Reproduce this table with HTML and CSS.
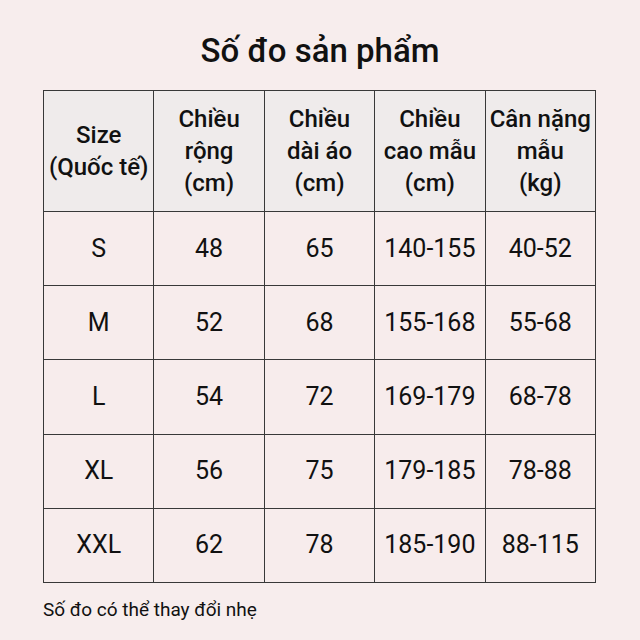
FILE: index.html
```html
<!DOCTYPE html>
<html lang="vi">
<head>
<meta charset="utf-8">
<title>Số đo sản phẩm</title>
<link rel="stylesheet" href="styles.css">
</head>
<body>
<main class="page">
  <h1 class="title">Số đo sản phẩm</h1>
  <table class="sizes">
    <thead>
      <tr class="head">
        <th>Size<br>(Quốc tế)</th>
        <th>Chiều<br>rộng<br>(cm)</th>
        <th>Chiều<br>dài áo<br>(cm)</th>
        <th>Chiều<br>cao mẫu<br>(cm)</th>
        <th>Cân nặng<br>mẫu<br>(kg)</th>
      </tr>
    </thead>
    <tbody>
      <tr><td>S</td><td>48</td><td>65</td><td>140-155</td><td>40-52</td></tr>
      <tr><td>M</td><td>52</td><td>68</td><td>155-168</td><td>55-68</td></tr>
      <tr><td>L</td><td>54</td><td>72</td><td>169-179</td><td>68-78</td></tr>
      <tr><td>XL</td><td>56</td><td>75</td><td>179-185</td><td>78-88</td></tr>
      <tr><td>XXL</td><td>62</td><td>78</td><td>185-190</td><td>88-115</td></tr>
    </tbody>
  </table>
  <p class="note">Số đo có thể thay đổi nhẹ</p>
</main>
</body>
</html>
```
FILE: styles.css
```css
html, body {
  margin: 0;
  padding: 0;
  background: #f7eded;
}
body {
  font-family: Roboto, "Liberation Sans", sans-serif;
  color: #111;
  width: 640px;
  height: 640px;
  overflow: hidden;
}
.page {
  display: flex;
  flex-direction: column;
  padding-top: 31px;
}
.title {
  margin: 0;
  font-size: 33px;
  font-weight: 500;
  line-height: 40px;
  text-align: center;
  color: #111;
}
.sizes {
  margin: 19px 0 0 43px;
  width: 553px;
  border-collapse: collapse;
  table-layout: fixed;
}
.sizes th, .sizes td {
  border: 1.5px solid #383838;
  padding: 0 2px;
  text-align: center;
  vertical-align: middle;
}
.sizes th {
  background: #efebeb;
  font-size: 24px;
  font-weight: 500;
  line-height: 32px;
  height: 120px;
}
.sizes td {
  background: #f7ecec;
  font-size: 25px;
  font-weight: 400;
  line-height: 30px;
  height: 73.2px;
}
.note {
  margin: 15px 0 0 43px;
  font-size: 19px;
  line-height: 24px;
  color: #111;
}
```
